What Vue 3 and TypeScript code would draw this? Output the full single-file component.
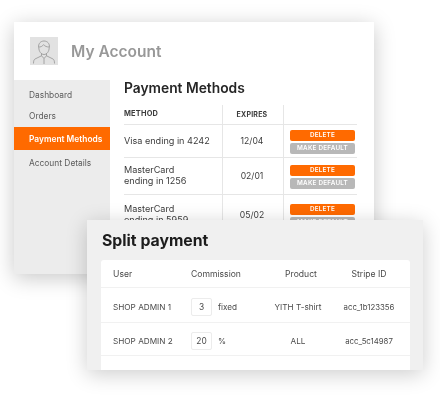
<template>
  <div class="page">
    <section class="account">
      <header class="account-head">
        <div class="avatar">
          <svg viewBox="0 0 28 28" width="28" height="28" fill="none" stroke="#949494" stroke-width="0.8">
            <path d="M8.600 10.500c-.4-4 2-6.500 5.400-6.500s5.800 2.500 5.400 6.500" />
            <path d="M8.600 10c1.800.2 3.800-.6 5-2.400 1 1.600 3.300 2.500 5.800 2.400" />
            <path d="M8.800 10.500c0 4 2.400 7 5.200 7s5.200-3 5.200-7" />
            <path d="M11.500 16.500v2.300L5 22c-1 .6-1.500 2-1.500 4.500M16.500 16.500v2.300L23 22c1 .6 1.500 2 1.500 4.500" />
            <path d="M11.500 18.800 14 21.500l2.500-2.700M14 21.500V27" />
          </svg>
        </div>
        <h1>My Account</h1>
      </header>
      <div class="account-body">
        <nav class="side">
          <a v-for="item in navItems" :key="item" :class="{ active: item === 'Payment Methods' }">{{ item }}</a>
        </nav>
        <main class="methods">
          <h2>Payment Methods</h2>
          <div class="method-row method-head">
            <div class="cell-method">METHOD</div>
            <div class="cell-exp">EXPIRES</div>
            <div class="cell-act"></div>
          </div>
          <div v-for="m in methods" :key="m.exp" class="method-row" :style="{ height: m.height + 'px' }">
            <div class="cell-method">{{ m.name }}</div>
            <div class="cell-exp">{{ m.exp }}</div>
            <div class="cell-act">
              <button class="btn-del">DELETE</button>
              <button class="btn-def">MAKE DEFAULT</button>
            </div>
          </div>
        </main>
      </div>
    </section>

    <section class="split">
      <h2>Split payment</h2>
      <div class="split-table">
        <div class="split-row split-head">
          <div>User</div>
          <div>Commission</div>
          <div class="center">Product</div>
          <div class="center">Stripe ID</div>
        </div>
        <div v-for="r in splits" :key="r.user" class="split-row" :style="{ height: r.height + 'px' }">
          <div>{{ r.user }}</div>
          <div class="commission">
            <span class="qty">{{ r.value }}</span>
            <span>{{ r.unit }}</span>
          </div>
          <div class="center">{{ r.product }}</div>
          <div class="center stripe">{{ r.stripe }}</div>
        </div>
      </div>
    </section>
  </div>
</template>

<script setup lang="ts">
const navItems = ['Dashboard', 'Orders', 'Payment Methods', 'Account Details']

const methods = [
  { name: 'Visa ending in 4242', exp: '12/04', height: 33 },
  { name: 'MasterCard\nending in 1256', exp: '02/01', height: 37 },
  { name: 'MasterCard\nending in 5959', exp: '05/02', height: 41 }
]

const splits = [
  { user: 'SHOP ADMIN 1', value: '3', unit: 'fixed', product: 'YITH T-shirt', stripe: 'acc_1b123356', height: 35 },
  { user: 'SHOP ADMIN 2', value: '20', unit: '%', product: 'ALL', stripe: 'acc_5c14987', height: 33 }
]
</script>

<style scoped>
.page {
  position: relative;
  width: 440px;
  height: 402px;
  overflow: hidden;
  background: #fff;
  font-family: Inter, "Open Sans", sans-serif;
  color: #3c3c3c;
  filter: blur(0.35px);
}

.account {
  width: 360px;
  height: 252px;
  margin: 22px 0 0 14px;
  background: #fff;
  box-shadow: 0 4px 20px rgba(0, 0, 0, 0.22);
  position: absolute;
  overflow: hidden;
}

.account-head {
  height: 58px;
  display: flex;
  align-items: center;
  gap: 13px;
  padding: 0 16px;
  box-sizing: border-box;
}

.avatar {
  width: 28px;
  height: 28px;
  background: #e2e2e2;
  overflow: hidden;
}

.avatar svg {
  display: block;
}

.account-head h1 {
  margin: 0;
  font-size: 15.5px;
  font-weight: 600;
  color: #989898;
}

.account-body {
  display: flex;
  height: 194px;
}

.side {
  width: 96px;
  flex-shrink: 0;
  background: #ececec;
  padding-top: 3px;
  display: flex;
  flex-direction: column;
  font-size: 8.4px;
  color: #5c5c5c;
}

.side a {
  height: 23px;
  padding-left: 15px;
  display: flex;
  align-items: center;
  margin-bottom: -2px;
}

.side a:nth-child(2) {
  margin-bottom: 0;
}

.side a.active {
  background: #ff6a00;
  color: #fff;
  font-weight: 600;
  margin-bottom: 1px;
}

.methods {
  width: 233px;
  margin-left: 14px;
}

.methods h2 {
  margin: 0;
  height: 25px;
  padding-bottom: 10px;
  box-sizing: border-box;
  display: flex;
  align-items: center;
  font-size: 13.8px;
  font-weight: 600;
  color: #262626;
}

.method-row {
  display: flex;
  border-bottom: 1px solid #e6e6e6;
  box-sizing: border-box;
  font-size: 8.6px;
}

.method-head {
  height: 20px;
  font-size: 7px;
  font-weight: 700;
  letter-spacing: 0.2px;
}

.method-head .cell-method {
  font-size: 7.4px;
}

.cell-method {
  width: 98px;
  display: flex;
  align-items: center;
  font-size: 9.1px;
  line-height: 10.7px;
  white-space: pre-line;
}

.cell-exp {
  width: 62px;
  border-left: 1px solid #e6e6e6;
  border-right: 1px solid #e6e6e6;
  box-sizing: border-box;
  display: flex;
  align-items: center;
  justify-content: center;
  padding-right: 2px;
}

.cell-act {
  flex: 1;
  display: flex;
  flex-direction: column;
  justify-content: center;
  gap: 2px;
  padding: 1px 2px 0 6px;
}

.cell-act button {
  height: 11px;
  padding: 0;
  border: none;
  border-radius: 2px;
  font-family: inherit;
  font-size: 6.3px;
  font-weight: 600;
  letter-spacing: 0.25px;
  color: #fff;
}

.btn-del {
  background: #ff6a00;
}

.btn-def {
  background: #b8b8b8;
}

.split {
  position: absolute;
  left: 87px;
  top: 220px;
  width: 336px;
  height: 150px;
  box-sizing: border-box;
  padding: 0 13px 0 14px;
  background: #f0f0f0;
  box-shadow: 0 4px 20px rgba(0, 0, 0, 0.2);
  overflow: hidden;
}

.split h2 {
  margin: 0;
  height: 40px;
  display: flex;
  align-items: center;
  padding-left: 1px;
  font-size: 15.8px;
  font-weight: 700;
  color: #1c1c1c;
}

.split-table {
  height: 110px;
  background: #fff;
  border-radius: 3px 3px 0 0;
}

.split-row {
  display: grid;
  grid-template-columns: 78px 68px 78px 64px;
  align-items: center;
  padding-left: 12px;
  border-bottom: 1px solid #f1f1f1;
  box-sizing: border-box;
  font-size: 8.2px;
  color: #4a4a4a;
}

.split-row:not(.split-head) {
  padding-top: 3px;
}

.split-head {
  height: 28px;
  font-size: 8.6px;
}

.split-head .center:nth-child(3) {
  padding-left: 6px;
}

.center {
  text-align: center;
}

.stripe {
  font-size: 7.8px;
}

.commission {
  display: flex;
  align-items: center;
  gap: 6px;
}

.qty {
  width: 21px;
  height: 18px;
  display: flex;
  align-items: center;
  justify-content: center;
  border: 1px solid #ececec;
  box-sizing: border-box;
  border-radius: 2px;
  font-size: 8.4px;
}
</style>

<style>
html, body {
  margin: 0;
  background: #fff;
}
</style>
